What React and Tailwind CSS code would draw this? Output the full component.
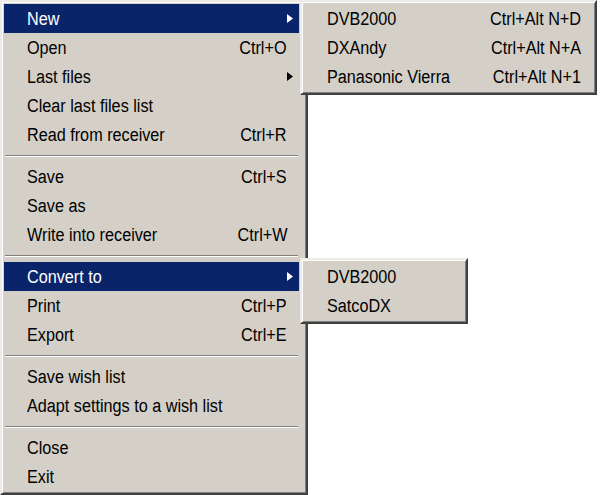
import React from 'react';

const frame =
    "bg-[#d4d0c8] border-2 border-t-[#ecebe6] border-l-[#ecebe6] border-r-[#404040] border-b-[#404040] shadow-[inset_1px_1px_0_#ffffff,inset_-1px_-1px_0_#808080]";

const Arrow = ({ light }) => (
    <svg width="6" height="9" viewBox="0 0 6 9" className="block">
        <polygon points="0,0 6,4.5 0,9" fill={light ? '#ffffff' : '#000000'} />
    </svg>
);

const Separator = () => (
    <div className="h-[13px] flex flex-col justify-center px-[1px]">
        <div className="h-px bg-[#808080]" />
        <div className="h-px bg-white" />
    </div>
);

const MenuRow = ({ label, shortcut, sub, active }) => (
    <div
        className={`h-[29px] flex items-center pl-[23px] ${active ? 'bg-[#0a246a] text-white' : 'text-black'}`}
    >
        <span className="flex-1 whitespace-nowrap">
            <span className="inline-block origin-left scale-x-[0.9]">{label}</span>
        </span>
        {shortcut && (
            <span className="inline-block origin-right scale-x-[0.9] whitespace-nowrap">{shortcut}</span>
        )}
        <span className="w-[12px] flex items-center">{sub && <Arrow light={active} />}</span>
    </div>
);

const mainMenu = [
    { label: 'New', sub: true, active: true },
    { label: 'Open', shortcut: 'Ctrl+O' },
    { label: 'Last files', sub: true },
    { label: 'Clear last files list' },
    { label: 'Read from receiver', shortcut: 'Ctrl+R' },
    'sep',
    { label: 'Save', shortcut: 'Ctrl+S' },
    { label: 'Save as' },
    { label: 'Write into receiver', shortcut: 'Ctrl+W' },
    'sep',
    { label: 'Convert to', sub: true, active: true },
    { label: 'Print', shortcut: 'Ctrl+P' },
    { label: 'Export', shortcut: 'Ctrl+E' },
    'sep',
    { label: 'Save wish list' },
    { label: 'Adapt settings to a wish list' },
    'sep',
    { label: 'Close' },
    { label: 'Exit' },
];

const newMenu = [
    { label: 'DVB2000', shortcut: 'Ctrl+Alt N+D' },
    { label: 'DXAndy', shortcut: 'Ctrl+Alt N+A' },
    { label: 'Panasonic Vierra', shortcut: 'Ctrl+Alt N+1' },
];

const convertMenu = [{ label: 'DVB2000' }, { label: 'SatcoDX' }];

const renderItems = (items) =>
    items.map((item, i) =>
        item === 'sep' ? <Separator key={i} /> : <MenuRow key={i} {...item} />
    );

export default function App() {
    return (
        <div className="relative w-[600px] h-[495px] bg-white overflow-hidden font-['Liberation_Sans',Arial,sans-serif] text-[18px] leading-none">
            {/* main file menu */}
            <div className={`${frame} w-[308px] h-[495px] pt-[2px] pl-[2px] pr-[7px] pb-[2px]`}>
                {renderItems(mainMenu)}
            </div>

            {/* New submenu */}
            <div className={`${frame} absolute left-[300px] top-0 w-[297px] h-[95px] p-[2px]`}>
                {renderItems(newMenu)}
            </div>

            {/* Convert to submenu */}
            <div className={`${frame} absolute left-[300px] top-[258px] w-[168px] h-[66px] p-[2px]`}>
                {renderItems(convertMenu)}
            </div>
        </div>
    );
}
